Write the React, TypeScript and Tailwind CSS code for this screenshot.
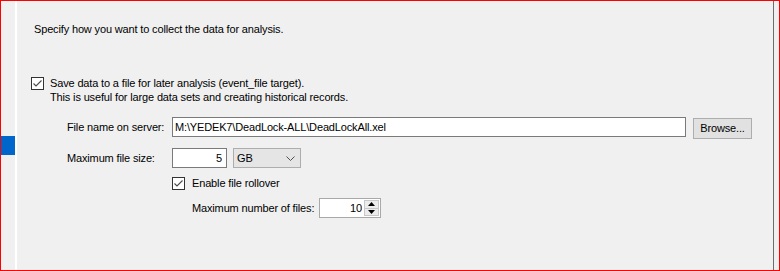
import React from "react";

function CheckBox() {
  return (
    <div className="w-[13px] h-[13px] shrink-0 border border-[#333333] bg-white flex items-center justify-center">
      <svg width="11" height="11" viewBox="0 0 11 11">
        <path d="M1.5 5.5 L4 8 L9.5 2.5" fill="none" stroke="#4a4a4a" strokeWidth="1.1" />
      </svg>
    </div>
  );
}

export default function App() {
  return (
    <div className="w-[780px] h-[271px] flex overflow-hidden border border-[#ff0000] bg-[#f0f0f0] text-black text-[11px] tracking-[-0.15px] font-['Liberation_Sans',Arial,sans-serif]">
      <div className="w-[14px] shrink-0">
        <div className="mt-[135px] h-[19px] bg-[#0066cc]" />
      </div>
      <div className="w-[2px] shrink-0 bg-white" />

      <div className="flex-1 flex flex-col">
        <div className="ml-[17px] mt-[21px] h-[14px] shrink-0 leading-[14px]">
          Specify how you want to collect the data for analysis.
        </div>

        <div className="ml-[14px] mt-[40px] shrink-0 flex gap-[6px]">
          <div className="mt-[1px]">
            <CheckBox />
          </div>
          <div className="leading-[14px]">
            <div>Save data to a file for later analysis (event_file target).</div>
            <div>This is useful for large data sets and creating historical records.</div>
          </div>
        </div>

        <div className="ml-[50px] mt-[13px] shrink-0 flex flex-col">
          <div className="flex items-start">
            <div className="w-[105px] h-[20px] leading-[20px]">File name on server:</div>
            <div className="w-[514px] h-[20px] border border-[#7a7a7a] bg-white px-[2px] leading-[18px]">
              M:\YEDEK7\DeadLock-ALL\DeadLockAll.xel
            </div>
            <button className="ml-[7px] mt-[1px] w-[59px] h-[21px] border border-[#adadad] bg-[#e1e1e1] leading-[19px] text-center">
              Browse...
            </button>
          </div>

          <div className="mt-[9px] flex items-start">
            <div className="w-[105px] h-[20px] leading-[20px]">Maximum file size:</div>
            <div className="w-[55px] h-[20px] border border-[#7a7a7a] bg-white pr-[4px] text-right leading-[18px]">
              5
            </div>
            <div className="ml-[6px] w-[68px] h-[20px] border border-[#adadad] bg-[#e5e5e5] flex items-center justify-between pl-[3px] pr-[5px]">
              <span className="leading-[18px]">GB</span>
              <svg width="9" height="5" viewBox="0 0 9 5">
                <path d="M0.5 0.5 L4.5 4.5 L8.5 0.5" fill="none" stroke="#505050" strokeWidth="1" />
              </svg>
            </div>
          </div>

          <div className="mt-[8px] ml-[105px] h-[14px] flex items-center gap-[7px]">
            <CheckBox />
            <span className="leading-[14px]">Enable file rollover</span>
          </div>

          <div className="mt-[8px] ml-[125px] flex items-start">
            <div className="w-[127px] h-[20px] leading-[20px]">Maximum number of files:</div>
            <div className="w-[62px] h-[20px] border border-[#a9a9a9] bg-white flex">
              <div className="flex-1 text-right pr-[2px] leading-[18px]">10</div>
              <div className="w-[15px] mr-[1px] flex flex-col py-[1px]">
                <div className="flex-1 border border-[#c8c8c8] bg-[#ececec] flex items-center justify-center">
                  <svg width="7" height="4" viewBox="0 0 7 4">
                    <path d="M0 4 L3.5 0 L7 4 Z" fill="#000" />
                  </svg>
                </div>
                <div className="flex-1 border border-t-0 border-[#c8c8c8] bg-[#ececec] flex items-center justify-center">
                  <svg width="7" height="4" viewBox="0 0 7 4">
                    <path d="M0 0 L3.5 4 L7 0 Z" fill="#000" />
                  </svg>
                </div>
              </div>
            </div>
          </div>
        </div>

        <div className="ml-[14px] mt-[53px] w-[13px] h-[1px] shrink-0 bg-[#b0201a]" />
      </div>

      <div className="w-px shrink-0 bg-[#6d6d6d]" />
      <div className="w-[5px] shrink-0" />
    </div>
  );
}
